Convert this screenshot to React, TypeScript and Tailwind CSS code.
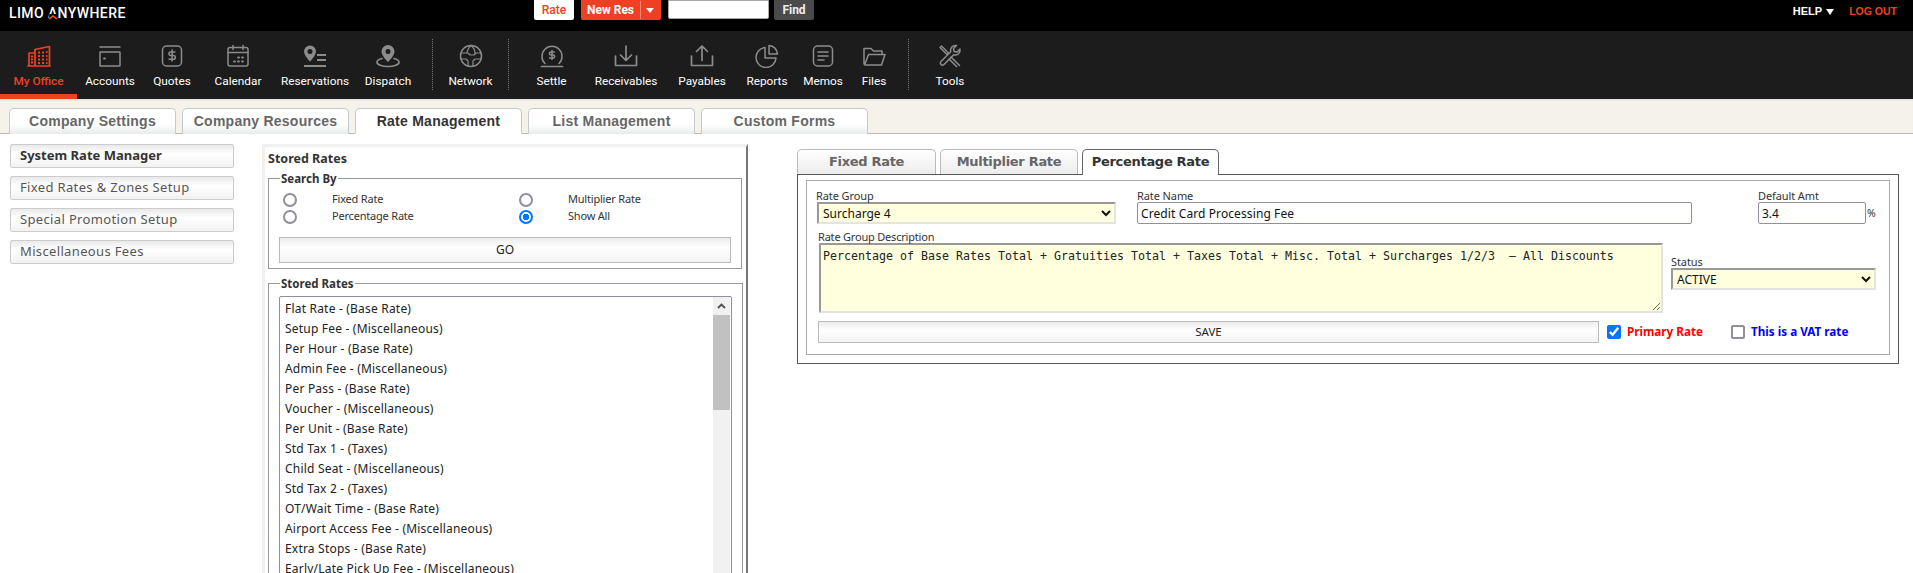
import React from "react";

const Svg = ({ children, color = "#8c8c8c" }: { children: React.ReactNode; color?: string }) => (
  <svg
    width="24"
    height="24"
    viewBox="0 0 24 24"
    fill="none"
    stroke={color}
    strokeWidth="1.5"
    strokeLinecap="round"
    strokeLinejoin="round"
  >
    {children}
  </svg>
);

const Dollar = ({ x, y, s }: { x: number; y: number; s: number }) => (
  <g transform={`translate(${x} ${y}) scale(${s})`}>
    <path d="M12 2v20M17 5.5H9.5a3.25 3.25 0 0 0 0 6.5h5a3.25 3.25 0 0 1 0 6.5H6.5" strokeWidth={1.5 / s} />
  </g>
);

const icons: Record<string, React.ReactNode> = {
  office: (
    <Svg color="#f04023">
      <path d="M8 22V5.5L22.5 2.5V22M2 22V9h6M1 22h22" strokeWidth="1.7" />
      <path
        d="M4 12.5h2M4 15.5h2M4 18.5h2M11 8.5h2M15 8.5h2M19 8h1.5M11 12h2M15 12h2M19 12h1.5M11 15.5h2M15 15.5h2M19 15.5h1.5M11 19h2M15 19h2M19 19h1.5"
        strokeWidth="1.8"
        strokeLinecap="butt"
      />
    </Svg>
  ),
  accounts: (
    <Svg>
      <path d="M2 3h20" />
      <rect x="2" y="8" width="20" height="14" rx="0.5" />
      <path d="M6 14.5h1" strokeWidth="1.8" />
    </Svg>
  ),
  quotes: (
    <Svg>
      <rect x="2.5" y="2" width="19" height="20" rx="4" />
      <Dollar x={5.5} y={5} s={0.55} />
    </Svg>
  ),
  calendar: (
    <Svg>
      <rect x="2" y="3.5" width="20" height="18.5" rx="2" />
      <path d="M2 8.5h20M7 1.5v4M17 1.5v4" />
      <path d="M12 13.5h1M16 13.5h1M8 17.5h1M12 17.5h1M16 17.5h1" strokeWidth="1.8" />
    </Svg>
  ),
  reservations: (
    <Svg>
      <path
        d="M7 1.5a6 6 0 0 0-6 6c0 4 6 10 6 10s6-6 6-10a6 6 0 0 0-6-6Zm0 3.5a2.5 2.5 0 1 1 0 5 2.5 2.5 0 0 1 0-5Z"
        fill="#8c8c8c"
        fillRule="evenodd"
        stroke="none"
      />
      <path d="M14 11h9M14 16h9M1 22h22" strokeWidth="2" strokeLinecap="butt" />
    </Svg>
  ),
  dispatch: (
    <Svg>
      <path
        d="M12 1a6.5 6.5 0 0 0-6.5 6.5c0 4.5 6.5 10.5 6.5 10.5s6.5-6 6.5-10.5A6.5 6.5 0 0 0 12 1Zm0 4a2.5 2.5 0 1 1 0 5 2.5 2.5 0 0 1 0-5Z"
        fill="#8c8c8c"
        fillRule="evenodd"
        stroke="none"
      />
      <path d="M6 14.5c-3 .8-5 2-5 3.7C1 20.6 6 22.5 12 22.5s11-1.9 11-4.3c0-1.7-2-2.9-5-3.7" strokeWidth="1.7" />
    </Svg>
  ),
  network: (
    <Svg>
      <circle cx="12" cy="12" r="10.5" />
      <path d="M2 9h7l2 2h4l2-2h5M2 15h5l2 2v5M22 15h-6l-2 2v5M12 1.5C9 4 8 8 8 9M12 1.5c3 2.5 4 6 4 7.5" strokeWidth="1.2" />
    </Svg>
  ),
  settle: (
    <Svg>
      <path d="M5 19.5A10 10 0 1 1 19 19.5" />
      <path d="M1.5 22.5h21" strokeWidth="1.7" />
      <Dollar x={6.5} y={5.5} s={0.46} />
    </Svg>
  ),
  receivables: (
    <Svg>
      <path d="M1.5 12v9.5h21V12M12 2v14M6.5 11l5.5 5.5 5.5-5.5" strokeWidth="1.7" />
    </Svg>
  ),
  payables: (
    <Svg>
      <path d="M1.5 12v9.5h21V12M12 16.5V2M6.5 7.5 12 2l5.5 5.5" strokeWidth="1.7" />
    </Svg>
  ),
  reports: (
    <Svg>
      <path d="M10 3.5A10 10 0 1 0 21 14H10V3.5Z" />
      <path d="M14 1.5a9 9 0 0 1 8.5 8.5H14V1.5Z" />
    </Svg>
  ),
  memos: (
    <Svg>
      <rect x="2.5" y="2" width="19" height="20" rx="4" />
      <path d="M7 8h10M7 12h10M7 16h6" />
    </Svg>
  ),
  files: (
    <Svg>
      <path d="M3 20 6.5 10.5H23L19.5 21H3.5A1.5 1.5 0 0 1 2 19.5V4.5h7L11.5 7H20v3.5" />
    </Svg>
  ),
  tools: (
    <Svg>
      <path d="M2 3.5 3.5 2l7 7-1.5 1.5ZM13 13l8.5 8.5M11 15l7.5 7.5" />
      <path d="M22 5l-3 3-3-.5-.5-3 3-3a5 5 0 0 0-5.8 6.3L3 17.5a2.1 2.1 0 0 0 3 3l9.7-9.7A5 5 0 0 0 22 5Z" />
    </Svg>
  ),
};

const navItems = [
  { icon: "office", label: "My Office", width: "w-[77px]", active: true },
  { icon: "accounts", label: "Accounts", width: "w-[66px]" },
  { icon: "quotes", label: "Quotes", width: "w-[58px]" },
  { icon: "calendar", label: "Calendar", width: "w-[74px]" },
  { icon: "reservations", label: "Reservations", width: "w-[80px]" },
  { icon: "dispatch", label: "Dispatch", width: "w-[66px]" },
  { divider: "ml-[11px] mr-0" },
  { icon: "network", label: "Network", width: "w-[75px]" },
  { divider: "" },
  { icon: "settle", label: "Settle", width: "w-[85px]" },
  { icon: "receivables", label: "Receivables", width: "w-[64px]" },
  { icon: "payables", label: "Payables", width: "w-[88px]" },
  { icon: "reports", label: "Reports", width: "w-[42px]" },
  { icon: "memos", label: "Memos", width: "w-[70px]" },
  { icon: "files", label: "Files", width: "w-[32px]" },
  { divider: "ml-[18px]" },
  { icon: "tools", label: "Tools", width: "w-[82px]" },
];

const topTabs = ["Company Settings", "Company Resources", "Rate Management", "List Management", "Custom Forms"];

const sideLinks = ["System Rate Manager", "Fixed Rates & Zones Setup", "Special Promotion Setup", "Miscellaneous Fees"];

const storedRates = [
  "Flat Rate - (Base Rate)",
  "Setup Fee - (Miscellaneous)",
  "Per Hour - (Base Rate)",
  "Admin Fee - (Miscellaneous)",
  "Per Pass - (Base Rate)",
  "Voucher - (Miscellaneous)",
  "Per Unit - (Base Rate)",
  "Std Tax 1 - (Taxes)",
  "Child Seat - (Miscellaneous)",
  "Std Tax 2 - (Taxes)",
  "OT/Wait Time - (Base Rate)",
  "Airport Access Fee - (Miscellaneous)",
  "Extra Stops - (Base Rate)",
  "Early/Late Pick Up Fee - (Miscellaneous)",
];

const DESCRIPTION =
  "Percentage of Base Rates Total + Gratuities Total + Taxes Total + Misc. Total + Surcharges 1/2/3  \u2013 All Discounts";

const bodyFont = "font-['Noto_Sans',sans-serif]";

function Radio({ label, checked }: { label: string; checked?: boolean }) {
  return (
    <label className="flex items-center h-[17px]">
      <input
        type="radio"
        name="searchBy"
        defaultChecked={checked}
        className="appearance-none w-[14px] h-[14px] m-0 shrink-0 rounded-full border-2 border-[#8f8f9d] bg-white checked:border-[#0075ff] checked:bg-[radial-gradient(circle,#0075ff_42%,#ffffff_48%)]"
      />
      <span className="ml-[35px] text-[11px] text-[#333] tracking-[-0.2px]">{label}</span>
    </label>
  );
}

export default function App() {
  return (
    <div className="w-[1913px] h-[573px] overflow-hidden bg-white flex flex-col font-['Roboto',sans-serif]">
      {/* Top bar */}
      <header className="h-[31px] shrink-0 bg-black flex items-start">
        <div className="w-[534px] pl-[9px] pt-[3px] text-white text-[14px] font-medium tracking-[0.4px] leading-[20px] whitespace-nowrap">
          LIMO{" "}
          <span className="relative">
            A
            <svg className="absolute left-0 top-[9px]" width="10" height="7" viewBox="0 0 10 7">
              <path d="M1.5 0h7L10 7H0Z" fill="#000" />
              <path d="M1 5 5 2l4 3" fill="none" stroke="#f04023" strokeWidth="1.6" />
            </svg>
          </span>
          NYWHERE
        </div>
        <button className="w-[40px] h-[20px] bg-white text-[#f04023] text-[12px] font-medium rounded-b-[2px]">Rate</button>
        <div className="ml-[7px] w-[80px] h-[20px] bg-[#f04023] rounded-b-[2px] flex items-center text-white text-[12px] font-bold">
          <span className="w-[60px] text-center border-r border-[#ff8a70]">New Res</span>
          <span className="ml-[5px] w-0 h-0 border-x-[4.5px] border-x-transparent border-t-[5px] border-t-white" />
        </div>
        <input className="ml-[7px] w-[101px] h-[19px] bg-white rounded-b-[2px] border border-[#aaa]" />
        <button className="ml-[5px] w-[40px] h-[20px] bg-[#4a4a4a] text-[#eee] text-[12px] font-bold rounded-b-[2px]">Find</button>
        <div className="ml-auto mr-[16px] mt-[5px] flex items-center text-[11px] font-['Liberation_Sans',sans-serif] font-bold leading-[13px]">
          <span className="text-white">HELP</span>
          <span className="ml-[4px] w-0 h-0 border-x-[4.5px] border-x-transparent border-t-[6px] border-t-white" />
          <span className="ml-[15px] text-[#f04023] text-[10.5px]">LOG OUT</span>
        </div>
      </header>

      {/* Main nav */}
      <nav className="h-[68px] shrink-0 bg-[#1c1c1c] flex items-start">
        {navItems.map((item, i) =>
          item.icon ? (
            <div
              key={i}
              className={`${item.width} shrink-0 h-[68px] flex flex-col items-center pt-[13px] ${
                item.active ? "border-b-[5px] border-[#f04023]" : ""
              }`}
            >
              {icons[item.icon]}
              <span
                className={`mt-[5px] whitespace-nowrap text-[11.8px] leading-[16px] ${
                  item.active ? "text-[#f04023] font-medium" : "text-white"
                }`}
              >
                {item.label}
              </span>
            </div>
          ) : (
            <div key={i} className={`${item.divider} shrink-0 w-px h-[51px] mt-[8px] border-l border-dotted border-[#777]`} />
          ),
        )}
      </nav>

      {/* Module tabs */}
      <div className="h-[35px] shrink-0 bg-[#f5f2eb] border-b border-[#bbb] pl-[9px] pt-[9px] flex gap-[6px] shadow-[inset_0_2px_2px_-1px_#ddd] font-['Liberation_Sans',sans-serif]">
        {topTabs.map((t, i) => (
          <div
            key={t}
            className={`w-[167px] h-[26px] border border-[#c5cacd] rounded-t-[5px] text-center text-[14px] font-bold tracking-[0.25px] leading-[24px] ${
              i === 2
                ? "bg-white border-b-white text-[#333]"
                : "bg-gradient-to-b from-white from-60% to-[#e9ebeb] border-b-0 text-[#666]"
            }`}
          >
            {t}
          </div>
        ))}
      </div>

      <main className={`flex-1 min-h-0 flex items-start overflow-hidden ${bodyFont}`}>
        {/* Left menu */}
        <div className="ml-[10px] mt-[10px] w-[224px] shrink-0 flex flex-col gap-[8px]">
          {sideLinks.map((s, i) => (
            <div
              key={s}
              className={`h-[24px] pl-[9px] border border-[#ccc] rounded-[2px] bg-gradient-to-b from-[#eaeaea] via-white via-40% to-[#f1f1f1] leading-[21px] ${
                i === 0 ? "text-[13px] font-bold text-[#333]" : "text-[13px] tracking-[0.35px] text-[#555]"
              }`}
            >
              {s}
            </div>
          ))}
        </div>

        {/* Stored rates panel */}
        <section className="ml-[28px] mt-[10px] w-[486px] h-[440px] shrink-0 border-l-[3px] border-t-[3px] border-[#f0f0f0] border-r-2 border-r-[#777] pl-[3px] pr-[4px]">
          <h2 className="text-[12.5px] font-bold text-[#333] leading-[17px] mt-[3px]">Stored Rates</h2>
          <fieldset className="mt-[5px] h-[97px] border border-[#999] px-[10px]">
            <legend className="ml-[1px] px-px text-[11.5px] font-bold text-[#333] leading-[13px]">Search By</legend>
            <div className="grid grid-cols-[236px_1fr] mt-[6px] pl-[4px]">
              <Radio label="Fixed Rate" />
              <Radio label="Multiplier Rate" />
              <Radio label="Percentage Rate" />
              <Radio label="Show All" checked />
            </div>
            <button className="mt-[12px] w-[452px] h-[26px] border border-[#bbb] bg-gradient-to-b from-[#ececec] via-white via-40% to-[#f4f4f4] text-[12px] text-[#222]">
              GO
            </button>
          </fieldset>
          <fieldset className="mt-[8px] h-[300px] border border-[#999] px-[10px]">
            <legend className="ml-[1px] px-px text-[11.5px] font-bold text-[#333] leading-[13px]">Stored Rates</legend>
            <div className="mt-[6px] w-[453px] h-[290px] border border-[#8f8f9d] rounded-t-[2px] flex">
              <ul className="flex-1 pl-[5px] pt-[2px]">
                {storedRates.map((r) => (
                  <li key={r} className="h-[20px] text-[12px] leading-[20px] text-[#222] tracking-[0.2px] whitespace-nowrap">
                    {r}
                  </li>
                ))}
              </ul>
              <div className="w-[17px] mx-px bg-[#f1f1f1] flex flex-col">
                <div className="h-[18px] flex items-center justify-center">
                  <svg width="9" height="6" viewBox="0 0 9 6" fill="none" stroke="#505050" strokeWidth="1.8">
                    <path d="M1 5 4.5 1.5 8 5" />
                  </svg>
                </div>
                <div className="h-[95px] bg-[#c1c1c1]" />
              </div>
            </div>
          </fieldset>
        </section>

        {/* Rate editor */}
        <section className="ml-[49px] mt-[15px] w-[1102px] shrink-0">
          <div className="flex gap-[4px] h-[25px] items-end text-[13px] font-bold leading-[24px] font-['DejaVu_Sans',sans-serif] tracking-[-0.3px]">
            <div className="w-[139px] h-[25px] text-center text-[#666] border border-b-0 border-[#bbb] rounded-t-[5px] bg-gradient-to-b from-white to-[#ececec]">Fixed Rate</div>
            <div className="w-[138px] h-[25px] text-center text-[#666] border border-b-0 border-[#bbb] rounded-t-[5px] bg-gradient-to-b from-white to-[#ececec]">Multiplier Rate</div>
            <div className="relative z-10 w-[137px] h-[26px] -mb-px text-center text-[#333] bg-white border border-b-0 border-[#666] rounded-t-[5px]">Percentage Rate</div>
          </div>
          <div className="h-[190px] border border-[#555] pl-[8px] pr-[8px] pt-[5px]">
            <div className="h-[175px] border border-[#aaa] pl-[9px] text-[#333]">
              {/* First row */}
              <div className="flex mt-[8px]">
                <div className="w-[321px]">
                  <label className="block text-[11px] leading-[13px] tracking-[-0.1px]">Rate Group</label>
                  <select
                    defaultValue="Surcharge 4"
                    className="block ml-[1px] w-[299px] h-[22px] bg-[#ffffdd] border-2 border-t-[#999] border-l-[#999] border-r-[#e3e3e3] border-b-[#e3e3e3] text-[12px] text-[#111]"
                  >
                    <option>Surcharge 4</option>
                  </select>
                </div>
                <div className="w-[621px]">
                  <label className="block text-[11px] leading-[13px] tracking-[-0.1px]">Rate Name</label>
                  <input
                    defaultValue="Credit Card Processing Fee"
                    className="block w-[555px] h-[22px] border border-[#8f8f9d] rounded-[2px] px-[3px] text-[12px] text-[#111] tracking-[0.1px] outline-none"
                  />
                </div>
                <div>
                  <label className="block text-[11px] leading-[13px] tracking-[-0.1px]">Default Amt</label>
                  <div className="flex items-center">
                    <input
                      defaultValue="3.4"
                      className="block w-[108px] h-[22px] border border-[#8f8f9d] rounded-[2px] px-[3px] text-[12px] text-[#111] outline-none"
                    />
                    <span className="ml-px text-[10.5px] leading-[16px]">%</span>
                  </div>
                </div>
              </div>

              {/* Description and status */}
              <div className="flex mt-[6px]">
                <div className="w-[855px] shrink-0">
                  <label className="block ml-[2px] text-[11px] leading-[13px] tracking-[-0.2px]">Rate Group Description</label>
                  <textarea
                    defaultValue={DESCRIPTION}
                    className="block ml-[3px] w-[844px] h-[70px] bg-[#ffffdd] border-2 border-t-[#999] border-l-[#999] border-r-[#e3e3e3] border-b-[#e3e3e3] px-[2px] pt-[4px] font-['DejaVu_Sans_Mono',monospace] text-[11.63px] leading-[15px] text-[#222] outline-none"
                  />
                </div>
                <div className="mt-[25px]">
                  <label className="block text-[11px] leading-[13px] tracking-[-0.1px]">Status</label>
                  <select
                    defaultValue="ACTIVE"
                    className="block w-[205px] h-[22px] bg-[#ffffdd] border-2 border-t-[#999] border-l-[#999] border-r-[#e3e3e3] border-b-[#e3e3e3] text-[12px] text-[#111]"
                  >
                    <option>ACTIVE</option>
                  </select>
                </div>
              </div>

              {/* Save row */}
              <div className="flex items-center mt-[8px]">
                <button className="ml-[2px] w-[781px] h-[22px] border border-[#bbb] bg-gradient-to-b from-[#ececec] via-white via-40% to-[#f4f4f4] text-[11.5px] text-[#222]">
                  SAVE
                </button>
                <input type="checkbox" defaultChecked className="ml-[8px] w-[14px] h-[14px] m-0" />
                <span className="ml-[6px] w-[90px] text-[11.7px] font-bold text-[#ff0000] whitespace-nowrap">Primary Rate</span>
                <input
                  type="checkbox"
                  className="appearance-none ml-[14px] w-[14px] h-[14px] m-0 rounded-[2px] border-2 border-[#8f8f9d] bg-white"
                />
                <span className="ml-[6px] text-[11.7px] font-bold text-[#0000ff] whitespace-nowrap">This is a VAT rate</span>
              </div>
            </div>
          </div>
        </section>
      </main>
    </div>
  );
}
